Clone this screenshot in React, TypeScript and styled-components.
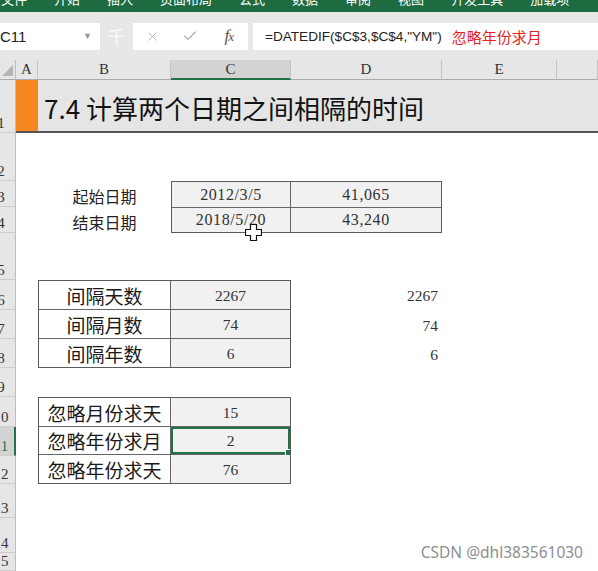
import React from "react";
import styled, { createGlobalStyle, css } from "styled-components";
import { X, Check } from "lucide-react";

const GlobalStyle = createGlobalStyle`
  html, body {
    margin: 0;
    padding: 0;
    background: #fff;
  }
  body {
    overflow: hidden;
  }
`;

const Screen = styled.div`
  position: relative;
  width: 598px;
  height: 571px;
  overflow: hidden;
  background: #fff;
  font-family: "Noto Sans CJK SC", sans-serif;
`;

/* ribbon tabs, only their lower edge is visible */
const Ribbon = styled.div`
  height: 12px;
  background: #1e6b41;
  display: flex;
  gap: 27px;
  overflow: hidden;
  padding-left: 1px;
`;

const RibbonTab = styled.span`
  margin-top: -10px;
  color: #fff;
  font-size: 13px;
  line-height: 18px;
  white-space: nowrap;
`;

const FormulaBar = styled.div`
  height: 48px;
  background: #e7e7e7;
  display: flex;
  align-items: center;
`;

const NameBox = styled.div`
  width: 100px;
  height: 27px;
  background: #fff;
  display: flex;
  align-items: center;
  justify-content: space-between;
  box-sizing: border-box;
  padding-right: 8px;
  font-family: "Liberation Sans", sans-serif;
  font-size: 15px;
  color: #222;
`;

const Caret = styled.span`
  font-size: 9px;
  color: #9a9a9a;
`;

const Watermark = styled.span`
  width: 33px;
  font-size: 18px;
  color: rgba(255, 255, 255, 0.75);
  text-align: center;
  line-height: 27px;
`;

const ButtonGroup = styled.div`
  width: 115px;
  height: 27px;
  background: #fff;
  display: grid;
  grid-template-columns: repeat(3, 1fr);
  align-items: center;
  justify-items: center;
`;

const Fx = styled.span`
  font-family: "Liberation Serif", serif;
  font-style: italic;
  font-size: 17px;
  color: #555;
  letter-spacing: -1px;

  small {
    font-size: 13px;
  }
`;

const FormulaInput = styled.div`
  flex: 1;
  margin-left: 5px;
  height: 27px;
  background: #fff;
  display: flex;
  align-items: center;
  padding-left: 12px;
  gap: 10px;
  white-space: nowrap;
`;

const FormulaText = styled.span`
  font-family: "Liberation Sans", sans-serif;
  font-size: 13.6px;
  color: #222;
`;

const FormulaNote = styled.span`
  font-size: 15px;
  color: #e8231c;
`;

const Sheet = styled.div`
  display: grid;
  grid-template-columns: 16px 22px 133px 120px 151px 115px 41px;
  grid-template-rows: 20px 53px 48px 26px 26px 47px 30px 29px 29px 29px 30px 29px 28px 34px 35px 18px;
`;

type Place = { $r: number | string; $c: number | string };

const placed = css<Place>`
  grid-row: ${(p) => p.$r};
  grid-column: ${(p) => p.$c};
`;

const Corner = styled.div`
  grid-row: 1;
  grid-column: 1;
  background: #e6e6e6;
  border-right: 1px solid #bdbdbd;
  border-bottom: 1px solid #ababab;
  box-sizing: border-box;
  display: flex;
  align-items: flex-end;
  justify-content: flex-end;
  padding: 0 2px 3px 0;
`;

const ColHeader = styled.div<Place & { $active?: boolean }>`
  ${placed};
  background: ${(p) => (p.$active ? "#d3d3d3" : "#e6e6e6")};
  border-right: 1px solid #c4c4c4;
  border-bottom: ${(p) => (p.$active ? "2px solid #217346" : "1px solid #ababab")};
  box-sizing: border-box;
  display: flex;
  align-items: center;
  justify-content: center;
  font-family: "Liberation Serif", serif;
  font-size: 15px;
  color: #333;
`;

const RowHeader = styled.div<Place & { $active?: boolean }>`
  ${placed};
  background: ${(p) => (p.$active ? "#d3d3d3" : "#e6e6e6")};
  border-right: ${(p) => (p.$active ? "2px solid #217346" : "1px solid #bdbdbd")};
  border-bottom: 1px solid #cdcdcd;
  box-sizing: border-box;
  overflow: hidden;
  display: flex;
  align-items: flex-end;
`;

const RowNumber = styled.span<{ $active?: boolean }>`
  flex-shrink: 0;
  width: 30px;
  margin-left: -14px;
  text-align: center;
  font-family: "Liberation Serif", serif;
  font-size: 15px;
  line-height: 17px;
  color: ${(p) => (p.$active ? "#217346" : "#333")};
`;

const AccentCell = styled.div`
  grid-row: 2;
  grid-column: 2;
  background: #f68620;
  border-bottom: 2px solid #555;
`;

const TitleCell = styled.div`
  grid-row: 2;
  grid-column: 3 / 8;
  background: #e5e5e5;
  border-bottom: 2px solid #555;
  display: flex;
  align-items: center;
  padding: 3px 0 0 6px;
  font-size: 26px;
  color: #111;
  white-space: nowrap;
`;

const Label = styled.div<Place>`
  ${placed};
  display: flex;
  align-items: center;
  justify-content: center;
  padding-top: 3px;
  font-size: 16px;
  color: #222;
`;

const DataTable = styled.div<Place & { $cols: string }>`
  ${placed};
  display: grid;
  grid-template-columns: ${(p) => p.$cols};
  grid-auto-rows: minmax(0, 1fr);
  gap: 1px;
  background: #666;
  border: 1px solid #5a5a5a;
  overflow: hidden;
`;

const Cell = styled.div<{ $head?: boolean; $selected?: boolean }>`
  position: relative;
  min-height: 0;
  display: flex;
  align-items: center;
  justify-content: center;
  background: ${(p) => (p.$head ? "#fff" : "#f1f1f1")};
  font-family: ${(p) => (p.$head ? `"Noto Sans CJK SC", sans-serif` : `"Liberation Serif", serif`)};
  font-size: ${(p) => (p.$head ? "19px" : "15.5px")};
  line-height: 1;
  color: ${(p) => (p.$head ? "#1a1a1a" : "#333")};
  padding-top: 1px;

  ${(p) =>
    p.$selected &&
    css`
      box-shadow: inset 0 0 0 2px #217346;
    `}
`;

const FillHandle = styled.span`
  position: absolute;
  right: -1px;
  bottom: -1px;
  width: 5px;
  height: 5px;
  background: #217346;
  border-left: 1px solid #fff;
  border-top: 1px solid #fff;
`;

const DateCell = styled(Cell)`
  font-size: 16px;
  letter-spacing: 0.6px;
`;

const PlainNumber = styled.div<Place>`
  ${placed};
  display: flex;
  align-items: center;
  justify-content: flex-end;
  padding: 2px 4px 0 0;
  font-family: "Liberation Serif", serif;
  font-size: 15.5px;
  color: #333;
`;

const Pointer = styled.svg`
  position: absolute;
  left: 245px;
  top: 224px;
`;

const Credit = styled.div`
  position: absolute;
  right: 15px;
  bottom: 8px;
  font-family: "Noto Sans", sans-serif;
  font-size: 15.5px;
  color: #8f8f8f;
  text-shadow: 0 0 2px #fff;
`;

const tabs = ["文件", "开始", "插入", "页面布局", "公式", "数据", "审阅", "视图", "开发工具", "加载项"];
const columns = ["A", "B", "C", "D", "E", ""];

export default function App() {
  return (
    <Screen>
      <GlobalStyle />
      <Ribbon>
        {tabs.map((t) => (
          <RibbonTab key={t}>{t}</RibbonTab>
        ))}
      </Ribbon>

      <FormulaBar>
        <NameBox>
          <span>C11</span>
          <Caret>▼</Caret>
        </NameBox>
        <Watermark>千</Watermark>
        <ButtonGroup>
          <X size={15} strokeWidth={1.4} color="#b0b0b0" />
          <Check size={16} strokeWidth={1.6} color="#a8a8a8" />
          <Fx>
            f<small>x</small>
          </Fx>
        </ButtonGroup>
        <FormulaInput>
          <FormulaText>=DATEDIF($C$3,$C$4,"YM")</FormulaText>
          <FormulaNote>忽略年份求月</FormulaNote>
        </FormulaInput>
      </FormulaBar>

      <Sheet>
        <Corner>
          <svg width="11" height="11" viewBox="0 0 11 11">
            <path d="M11 0 V11 H0 Z" fill="#b5b5b5" />
          </svg>
        </Corner>
        {columns.map((c, i) => (
          <ColHeader key={i} $r={1} $c={i + 2} $active={c === "C"}>
            {c}
          </ColHeader>
        ))}
        {Array.from({ length: 15 }, (_, i) => (
          <RowHeader key={i} $r={i + 2} $c={1} $active={i + 1 === 11}>
            <RowNumber $active={i + 1 === 11}>{i + 1}</RowNumber>
          </RowHeader>
        ))}

        <AccentCell />
        <TitleCell>7.4 计算两个日期之间相隔的时间</TitleCell>

        <Label $r={4} $c={3}>起始日期</Label>
        <Label $r={5} $c={3}>结束日期</Label>
        <DataTable $r="4 / 6" $c="4 / 6" $cols="118px 1fr">
          <DateCell>2012/3/5</DateCell>
          <DateCell>41,065</DateCell>
          <DateCell>2018/5/20</DateCell>
          <DateCell>43,240</DateCell>
        </DataTable>

        <DataTable $r="7 / 10" $c="3 / 5" $cols="131px 1fr">
          <Cell $head>间隔天数</Cell>
          <Cell>2267</Cell>
          <Cell $head>间隔月数</Cell>
          <Cell>74</Cell>
          <Cell $head>间隔年数</Cell>
          <Cell>6</Cell>
        </DataTable>
        <PlainNumber $r={7} $c={5}>2267</PlainNumber>
        <PlainNumber $r={8} $c={5}>74</PlainNumber>
        <PlainNumber $r={9} $c={5}>6</PlainNumber>

        <DataTable $r="11 / 14" $c="3 / 5" $cols="131px 1fr">
          <Cell $head>忽略月份求天</Cell>
          <Cell>15</Cell>
          <Cell $head>忽略年份求月</Cell>
          <Cell $selected>
            2
            <FillHandle />
          </Cell>
          <Cell $head>忽略年份求天</Cell>
          <Cell>76</Cell>
        </DataTable>
      </Sheet>

      <Pointer width="17" height="17" viewBox="0 0 17 17">
        <path
          d="M5.5 0.5 H11.5 V5.5 H16.5 V11.5 H11.5 V16.5 H5.5 V11.5 H0.5 V5.5 H5.5 Z"
          fill="#fff"
          stroke="#111"
          strokeWidth="1.2"
        />
      </Pointer>
      <Credit>CSDN @dhl383561030</Credit>
    </Screen>
  );
}
